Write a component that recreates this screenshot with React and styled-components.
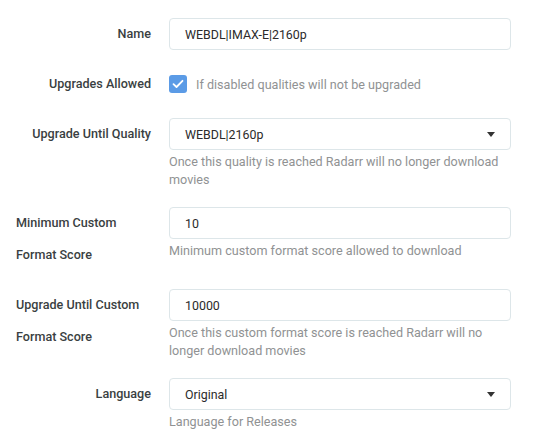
import React from 'react';
import styled, { createGlobalStyle } from 'styled-components';

const GlobalStyle = createGlobalStyle`
  body {
    margin: 0;
    background: #fff;
    font-family: Roboto, "Liberation Sans", sans-serif;
    font-size: 12.6px;
    color: #515253;
  }
`;

const Form = styled.div`
  padding: 18px 28px 0 16px;
  width: 539px;
  box-sizing: border-box;
`;

const Group = styled.div`
  display: flex;
  margin-bottom: 18px;
`;

const Label = styled.label`
  flex: 0 0 135px;
  display: flex;
  justify-content: flex-end;
  margin-right: 18px;
  font-weight: 500;
  font-size: 12.6px;
  line-height: 32px;
  color: #3a3f42;
`;

const Field = styled.div`
  flex: 1;
  min-width: 0;
`;

const Input = styled.div`
  height: 32px;
  box-sizing: border-box;
  border: 1px solid #dde6e9;
  border-radius: 4px;
  padding: 0 15px;
  display: flex;
  align-items: center;
  justify-content: space-between;
  font-size: 12.4px;
  color: #2b2b2b;
`;

const Caret = styled.span`
  width: 0;
  height: 0;
  border-left: 4.5px solid transparent;
  border-right: 4.5px solid transparent;
  border-top: 5px solid #333;
`;

const Help = styled.div`
  margin-top: 3px;
  line-height: 18px;
  color: #909293;
  font-size: 12.6px;
`;

const CheckRow = styled.div`
  display: flex;
  align-items: center;
  height: 32px;
`;

const Box = styled.span`
  width: 18px;
  height: 18px;
  border-radius: 3px;
  background: #5b9be6;
  display: flex;
  align-items: center;
  justify-content: center;
  margin-right: 9px;
`;

const CheckText = styled.span`
  color: #909293;
`;

const Checkmark = () => (
  <svg width="12" height="10" viewBox="0 0 12 10">
    <path d="M1.5 5.2 L4.5 8 L10.5 1.8" fill="none" stroke="#fff" strokeWidth="1.8" strokeLinecap="round" strokeLinejoin="round" />
  </svg>
);

const rows = [
  { label: 'Name', value: 'WEBDL|IMAX-E|2160p' },
  { label: 'Upgrades Allowed', check: 'If disabled qualities will not be upgraded' },
  { label: 'Upgrade Until Quality', value: 'WEBDL|2160p', select: true, help: 'Once this quality is reached Radarr will no longer download movies' },
  { label: 'Minimum Custom Format Score', value: '10', help: 'Minimum custom format score allowed to download' },
  { label: 'Upgrade Until Custom Format Score', value: '10000', help: 'Once this custom format score is reached Radarr will no longer download movies' },
  { label: 'Language', value: 'Original', select: true, help: 'Language for Releases' },
];

const App = () => (
  <>
    <GlobalStyle />
    <Form>
      {rows.map((row) => (
        <Group key={row.label}>
          <Label>{row.label}</Label>
          <Field>
            {row.check ? (
              <CheckRow>
                <Box><Checkmark /></Box>
                <CheckText>{row.check}</CheckText>
              </CheckRow>
            ) : (
              <Input>
                <span>{row.value}</span>
                {row.select && <Caret />}
              </Input>
            )}
            {row.help && <Help>{row.help}</Help>}
          </Field>
        </Group>
      ))}
    </Form>
  </>
);

export default App;
